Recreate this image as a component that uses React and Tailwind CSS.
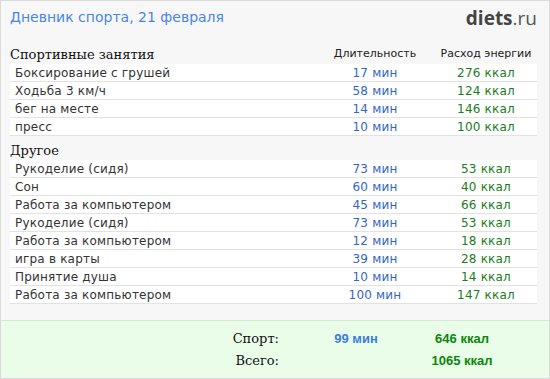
import React from "react";

const sport = [
  ["Боксирование с грушей", "17 мин", "276 ккал"],
  ["Ходьба 3 км/ч", "58 мин", "124 ккал"],
  ["бег на месте", "14 мин", "146 ккал"],
  ["пресс", "10 мин", "100 ккал"],
];
const other = [
  ["Рукоделие (сидя)", "73 мин", "53 ккал"],
  ["Сон", "60 мин", "40 ккал"],
  ["Работа за компьютером", "45 мин", "66 ккал"],
  ["Рукоделие (сидя)", "73 мин", "53 ккал"],
  ["Работа за компьютером", "12 мин", "18 ккал"],
  ["игра в карты", "39 мин", "28 ккал"],
  ["Принятие душа", "10 мин", "14 ккал"],
  ["Работа за компьютером", "100 мин", "147 ккал"],
];

const sans = "font-['DejaVu_Sans',sans-serif]";
const serif = "font-['DejaVu_Serif',serif]";

function Row({ r }) {
  return (
    <div className={`flex h-[18px] items-center bg-white border-b border-[#e2e2e2] text-[12px] tracking-[0.2px] ${sans}`}>
      <div className="flex-1 pl-[5px] text-[#333]">{r[0]}</div>
      <div className="w-[120px] text-center text-[#3366c8]">{r[1]}</div>
      <div className="w-[102px] text-center text-[#1b7d1b]">{r[2]}</div>
    </div>
  );
}

export default function App() {
  return (
    <div className="w-[550px] h-[379px] border border-[#dadada] bg-[#f7f7f7] flex flex-col overflow-hidden">
      <div className="h-[44px] flex items-start justify-between pl-[9px] pr-[12px] pt-[5px]">
        <div className={`text-[14px] leading-[22px] text-[#4a85e4] ${sans}`}>Дневник спорта, 21 февраля</div>
        <div className="text-[19px] leading-[24px] font-['Open_Sans',sans-serif] text-[#444]">
          <span className="font-bold">diets</span>
          <span className="text-[#555]">.ru</span>
        </div>
      </div>
      <div className="ml-[9px] mr-[12px]">
        <div className="flex h-[19px] items-center">
          <div className={`flex-1 text-[13px] text-[#111] ${serif}`}>Спортивные занятия</div>
          <div className={`w-[120px] text-center text-[11px] text-[#222] ${sans}`}>Длительность</div>
          <div className={`w-[102px] text-center text-[11px] text-[#222] ${sans}`}>Расход энергии</div>
        </div>
        {sport.map((r, i) => (
          <Row key={i} r={r} />
        ))}
        <div className="flex h-[19px] items-center mt-[5px]">
          <div className={`flex-1 text-[13px] text-[#111] ${serif}`}>Другое</div>
        </div>
        {other.map((r, i) => (
          <Row key={i} r={r} />
        ))}
      </div>
      <div className="mt-auto h-[58px] border-t border-[#d6e8d6] bg-[#e9fde9] flex flex-col pt-[7px]">
        <div className="flex h-[22px] items-center">
          <div className={`w-[278px] text-right text-[13px] text-[#111] ${serif}`}>Спорт:</div>
          <div className="ml-[27px] w-[100px] text-center text-[13px] font-bold text-[#3b7ee2] font-['Liberation_Sans',sans-serif]">99 мин</div>
          <div className="ml-[6px] w-[100px] text-center text-[13px] font-bold text-[#0b860b] font-['Liberation_Sans',sans-serif]">646 ккал</div>
        </div>
        <div className="flex h-[22px] items-center">
          <div className={`w-[278px] text-right text-[13px] text-[#111] ${serif}`}>Всего:</div>
          <div className="ml-[27px] w-[100px]"></div>
          <div className="ml-[6px] w-[100px] text-center text-[13px] font-bold text-[#0b860b] font-['Liberation_Sans',sans-serif]">1065 ккал</div>
        </div>
      </div>
    </div>
  );
}
